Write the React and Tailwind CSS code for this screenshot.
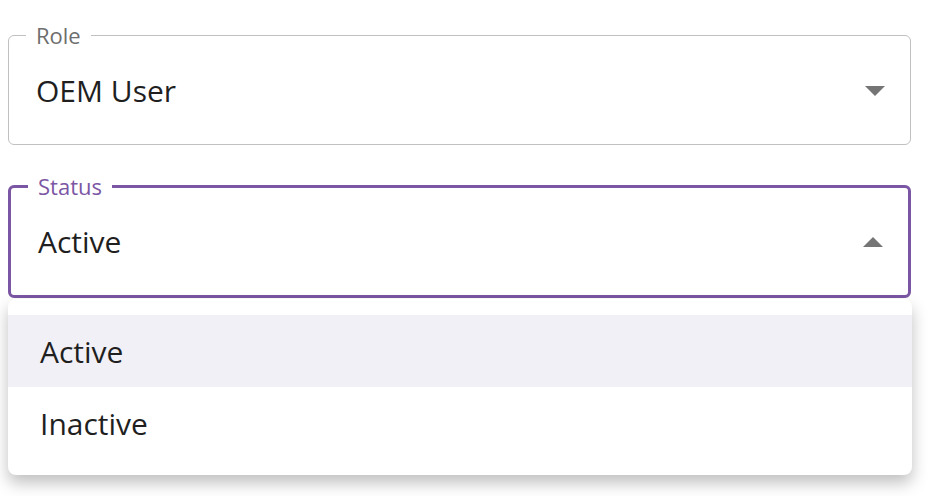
import React from 'react';

const FONT = { fontFamily: '"Open Sans", "Liberation Sans", sans-serif' };

function Caret({ up }) {
  return (
    <svg width="20" height="10" viewBox="0 0 20 10" className="shrink-0">
      {up ? <path d="M0 10 L10 0 L20 10 Z" fill="#757575" /> : <path d="M0 0 L20 0 L10 10 Z" fill="#757575" />}
    </svg>
  );
}

function Field({ label, value, focused }) {
  return (
    <fieldset
      className={`ml-[8px] w-[903px] rounded-[6px] px-[17px] ${focused ? 'border-[3px] border-[#7b56a4]' : 'border-[1.5px] border-[#c0c0c0]'}`}
    >
      <legend
        className={`px-[10px] text-[22px] leading-[24px] ${focused ? 'text-[#7b56a4]' : 'text-[#6e6e6e]'}`}
      >
        {label}
      </legend>
      <div className="flex items-center justify-between h-[97px] pb-[10px] pl-[10px] pr-[8px]">
        <span className="text-[30px] text-[#1f1f1f]">{value}</span>
        <Caret up={focused} />
      </div>
    </fieldset>
  );
}

export default function App() {
  const options = ['Active', 'Inactive'];
  return (
    <div className="w-[928px] h-[496px] bg-white overflow-hidden pt-[23px]" style={FONT}>
      <Field label="Role" value="OEM User" />
      <div className="h-[29px]" />
      <Field label="Status" value="Active" focused />
      <ul className="ml-[8px] mt-[1px] w-[904px] rounded-[8px] bg-white py-[16px] shadow-[0_8px_16px_rgba(0,0,0,0.25)]">
        {options.map((o, i) => (
          <li
            key={o}
            className={`h-[72px] flex items-center px-[32px] text-[30px] text-[#1f1f1f] ${i === 0 ? 'bg-[#f1f0f6]' : ''}`}
          >
            {o}
          </li>
        ))}
      </ul>
    </div>
  );
}
